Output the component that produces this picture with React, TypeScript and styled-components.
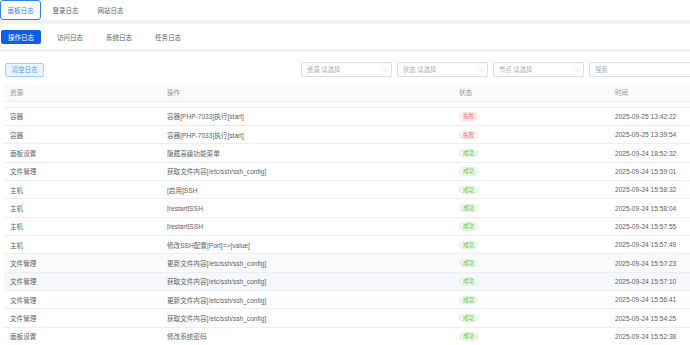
import React, { useLayoutEffect, useRef } from "react";
import styled, { createGlobalStyle } from "styled-components";

const GlobalStyle = createGlobalStyle`
  html, body { margin: 0; padding: 0; }
  body {
    background: #f0f2f5;
    overflow: hidden;
    font-family: "Liberation Sans", "Noto Sans CJK SC", sans-serif;
    -webkit-font-smoothing: antialiased;
  }
  * { box-sizing: border-box; }
`;

const Page = styled.div`
  width: 700px;
  display: flex;
  flex-direction: column;
`;

const TopTabs = styled.div`
  height: 20px;
  background: #fff;
  display: flex;
  align-items: stretch;
  gap: 4px;
`;

const TopTab = styled.div<{ $active?: boolean }>`
  width: 41px;
  display: flex;
  align-items: center;
  justify-content: center;
  font-size: 6.5px;
  color: ${(p) => (p.$active ? "#2f7ff0" : "#606266")};
  border: 1.5px solid ${(p) => (p.$active ? "#2f7ff0" : "transparent")};
  border-radius: 3px;
  height: 19.5px;
`;

const SubTabs = styled.div`
  margin-top: 4px;
  height: 25px;
  background: #fff;
  display: flex;
  align-items: center;
  gap: 9px;
  padding-left: 1px;
`;

const SubTab = styled.div<{ $active?: boolean }>`
  width: 40px;
  height: 14px;
  margin-top: 1px;
  display: flex;
  align-items: center;
  justify-content: center;
  font-size: 6.5px;
  border-radius: 2px;
  color: ${(p) => (p.$active ? "#fff" : "#606266")};
  background: ${(p) => (p.$active ? "#0f5fe6" : "transparent")};
`;

const Main = styled.div`
  margin-top: 3px;
  background: #fff;
  padding: 10px 1px 0 4px;
  height: 300px;
`;

const Toolbar = styled.div`
  display: flex;
  align-items: center;
  height: 15px;
`;

const ClearButton = styled.button`
  margin-left: 1px;
  height: 14px;
  width: 39px;
  padding: 0;
  font-family: inherit;
  font-size: 6.4px;
  color: #409eff;
  background: #ecf5ff;
  border: 1px solid #a0cfff;
  border-radius: 2px;
`;

const Filters = styled.div`
  margin-left: auto;
  display: flex;
  gap: 5px;
`;

const Select = styled.div`
  width: 91px;
  height: 15px;
  border: 1px solid #dcdfe6;
  border-radius: 2px;
  display: flex;
  align-items: center;
  padding: 0 4px 0 5px;
  font-size: 6.3px;
  color: #a8abb2;
`;

const SelectLabel = styled.span`
  flex: 1;
`;

const Search = styled(Select)`
  width: 110px;
`;

const Table = styled.div`
  margin-top: 7px;
  width: 695px;
`;

const HeaderRow = styled.div`
  display: grid;
  grid-template-columns: 157px 292px 156px 1fr;
  height: 17.5px;
  background: #fafafa;
  border-bottom: 1px solid #ebeef5;
  align-items: center;
  font-size: 6.5px;
  color: #909399;
`;

const Cell = styled.div`
  padding-left: 6px;
  white-space: nowrap;
  overflow: hidden;
`;

const Body = styled.div`
  height: 243px;
  overflow: hidden;
`;

const Row = styled.div<{ $bg?: string }>`
  display: grid;
  grid-template-columns: 157px 292px 156px 1fr;
  height: 18.33px;
  align-items: center;
  border-bottom: 1px solid #ebeef5;
  background: ${(p) => p.$bg || "#fff"};
  font-size: 6.6px;
  color: #606266;
`;

const Tag = styled.span<{ $ok: boolean }>`
  display: inline-flex;
  align-items: center;
  vertical-align: middle;
  height: 8.5px;
  min-width: 18px;
  padding: 0 3px;
  border-radius: 5px;
  font-size: 5.6px;
  color: ${(p) => (p.$ok ? "#67c23a" : "#f56c6c")};
  background: ${(p) => (p.$ok ? "#f0f9eb" : "#fef0f0")};
  border: 0.5px solid ${(p) => (p.$ok ? "#e1f3d8" : "#fde2e2")};
`;

const Chevron = () => (
  <svg width="5" height="4" viewBox="0 0 10 6" fill="none">
    <polyline points="1,1 5,5 9,1" stroke="#c0c4cc" strokeWidth="1" />
  </svg>
);

type Log = { src: string; op: string; ok: boolean; time: string; bg?: string; clipped?: boolean };

const logs: Log[] = [
  { src: "", op: "", ok: true, time: "", clipped: true },
  { src: "容器", op: "容器[PHP-7033]执行[start]", ok: false, time: "2025-09-25 13:42:22" },
  { src: "容器", op: "容器[PHP-7033]执行[start]", ok: false, time: "2025-09-25 13:39:54" },
  { src: "面板设置", op: "隐藏高级功能菜单", ok: true, time: "2025-09-24 18:52:32" },
  { src: "文件管理", op: "获取文件内容[/etc/ssh/ssh_config]", ok: true, time: "2025-09-24 15:59:01" },
  { src: "主机", op: "[启用]SSH", ok: true, time: "2025-09-24 15:58:32" },
  { src: "主机", op: "[restart]SSH", ok: true, time: "2025-09-24 15:58:04" },
  { src: "主机", op: "[restart]SSH", ok: true, time: "2025-09-24 15:57:55" },
  { src: "主机", op: "修改SSH配置[Port]=>[value]", ok: true, time: "2025-09-24 15:57:49" },
  { src: "文件管理", op: "更新文件内容[/etc/ssh/ssh_config]", ok: true, time: "2025-09-24 15:57:23", bg: "#fafafa" },
  { src: "文件管理", op: "获取文件内容[/etc/ssh/ssh_config]", ok: true, time: "2025-09-24 15:57:10", bg: "#f5f7fa" },
  { src: "文件管理", op: "更新文件内容[/etc/ssh/ssh_config]", ok: true, time: "2025-09-24 15:56:41" },
  { src: "文件管理", op: "获取文件内容[/etc/ssh/ssh_config]", ok: true, time: "2025-09-24 15:54:25" },
  { src: "面板设置", op: "修改系统密码", ok: true, time: "2025-09-24 15:52:38" },
];

export default function App() {
  const bodyRef = useRef<HTMLDivElement>(null);
  useLayoutEffect(() => {
    if (bodyRef.current) bodyRef.current.scrollTop = 12;
  }, []);

  return (
    <>
      <GlobalStyle />
      <Page>
        <TopTabs>
          <TopTab $active>面板日志</TopTab>
          <TopTab>登录日志</TopTab>
          <TopTab>网站日志</TopTab>
        </TopTabs>
        <SubTabs>
          <SubTab $active>操作日志</SubTab>
          <SubTab>访问日志</SubTab>
          <SubTab>系统日志</SubTab>
          <SubTab>任务日志</SubTab>
        </SubTabs>
        <Main>
          <Toolbar>
            <ClearButton>清空日志</ClearButton>
            <Filters>
              <Select>
                <SelectLabel>资源 请选择</SelectLabel>
                <Chevron />
              </Select>
              <Select>
                <SelectLabel>状态 请选择</SelectLabel>
                <Chevron />
              </Select>
              <Select>
                <SelectLabel>节点 请选择</SelectLabel>
                <Chevron />
              </Select>
              <Search>
                <SelectLabel>搜索</SelectLabel>
              </Search>
            </Filters>
          </Toolbar>
          <Table>
            <HeaderRow>
              <Cell>资源</Cell>
              <Cell>操作</Cell>
              <Cell>状态</Cell>
              <Cell>时间</Cell>
            </HeaderRow>
            <Body ref={bodyRef}>
              {logs.map((l, i) => (
                <Row key={i} $bg={l.bg}>
                  <Cell>{l.src}</Cell>
                  <Cell>{l.op}</Cell>
                  <Cell>
                    <Tag $ok={l.ok}>{l.clipped ? "" : l.ok ? "成功" : "失败"}</Tag>
                  </Cell>
                  <Cell>{l.time}</Cell>
                </Row>
              ))}
            </Body>
          </Table>
        </Main>
      </Page>
    </>
  );
}
